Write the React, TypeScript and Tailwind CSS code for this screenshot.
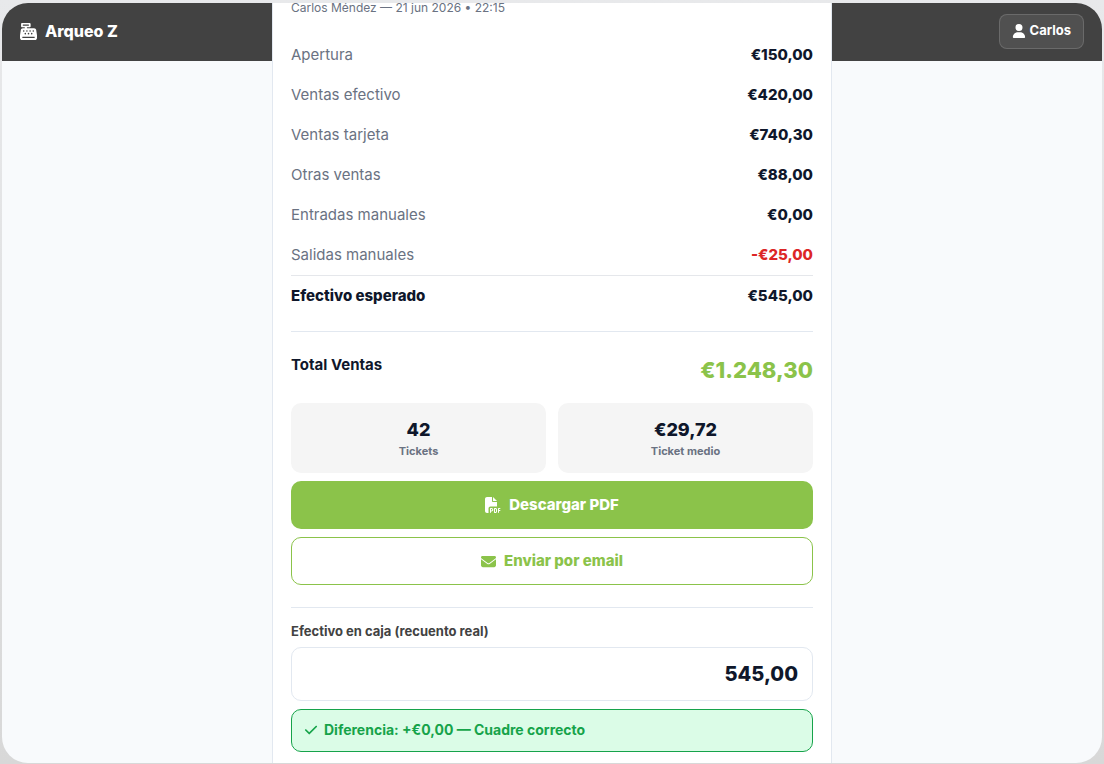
import { useState } from "react";
import { FaCashRegister, FaCheck, FaEnvelope, FaFilePdf, FaUser } from "react-icons/fa6";

const movements = [
  { label: "Apertura", amount: "€150,00" },
  { label: "Ventas efectivo", amount: "€420,00" },
  { label: "Ventas tarjeta", amount: "€740,30" },
  { label: "Otras ventas", amount: "€88,00" },
  { label: "Entradas manuales", amount: "€0,00" },
  { label: "Salidas manuales", amount: "-€25,00", negative: true },
];

const stats = [
  { value: "42", label: "Tickets" },
  { value: "€29,72", label: "Ticket medio" },
];

function Header() {
  return (
    <header className="flex h-[58px] items-center justify-between bg-[#424242] px-[18px] pb-0.5 text-white">
      <div className="flex items-center gap-2">
        <FaCashRegister className="size-[17px]" />
        <h1 className="text-base font-extrabold">Arqueo Z</h1>
      </div>
      <button
        type="button"
        className="flex h-[35px] items-center gap-1 rounded-lg border border-white/15 bg-white/8 px-3 text-[13px] font-bold"
      >
        <FaUser className="size-3.5" />
        Carlos
      </button>
    </header>
  );
}

function Report() {
  const [counted, setCounted] = useState("545,00");
  return (
    <main className="h-full w-full max-w-[560px] overflow-hidden border-x border-slate-200 bg-white px-[18px] text-[15px] text-slate-900">
      <p className="text-xs leading-[10px] text-gray-500">Carlos Méndez — 21 jun 2026 • 22:15</p>

      <dl className="mt-[22px]">
        {movements.map((row) => (
          <div key={row.label} className="flex h-10 items-center justify-between">
            <dt className="text-gray-500">{row.label}</dt>
            <dd className={row.negative ? "font-extrabold text-[#dc2626]" : "font-extrabold"}>{row.amount}</dd>
          </div>
        ))}
        <div className="flex h-[41px] items-center justify-between border-t border-gray-200 font-extrabold">
          <dt>Efectivo esperado</dt>
          <dd>€545,00</dd>
        </div>
      </dl>

      <section className="mt-[15px] border-t border-slate-200 pt-5">
        <div className="flex justify-between">
          <h2 className="leading-[26px] font-bold">Total Ventas</h2>
          <p className="text-[22px] leading-9 font-extrabold text-[#8bc34a]">€1.248,30</p>
        </div>
        <div className="mt-[15px] grid grid-cols-2 gap-3">
          {stats.map((stat) => (
            <div key={stat.label} className="rounded-[10px] bg-[#f5f5f5] py-3.5 text-center">
              <p className="text-lg leading-[26px] font-extrabold">{stat.value}</p>
              <p className="text-[11px] leading-4 font-bold text-gray-500">{stat.label}</p>
            </div>
          ))}
        </div>
        <div className="mt-2 grid gap-2 font-extrabold">
          <button
            type="button"
            className="flex h-12 items-center justify-center gap-2 rounded-[10px] bg-[#8bc34a] text-white"
          >
            <FaFilePdf className="size-4" />
            Descargar PDF
          </button>
          <button
            type="button"
            className="flex h-12 items-center justify-center gap-2 rounded-[10px] border border-[#8bc34a] text-[#8bc34a]"
          >
            <FaEnvelope className="size-[15px]" />
            Enviar por email
          </button>
        </div>
      </section>

      <section className="mt-[22px] border-t border-slate-200 pt-3.5">
        <label htmlFor="counted" className="block text-[13px] leading-[18px] font-bold text-[#424242]">
          Efectivo en caja (recuento real)
        </label>
        <input
          id="counted"
          type="text"
          inputMode="decimal"
          value={counted}
          onChange={(event) => setCounted(event.target.value)}
          className="mt-[7px] block h-[54px] w-full rounded-[10px] border border-slate-200 px-3.5 text-right text-xl font-extrabold"
        />
        <p
          role="status"
          className="mt-2 flex h-[43px] items-center gap-1.5 rounded-[10px] border border-[#16a34a] bg-green-100 px-3 pb-0.5 text-sm font-bold text-[#16a34a]"
        >
          <FaCheck className="size-3.5" />
          Diferencia: +€0,00 — Cuadre correcto
        </p>
      </section>
    </main>
  );
}

export default function App() {
  return (
    <div className="h-screen bg-linear-to-b from-[#e8e9eb] to-[#d8d8d8] px-0.5 pt-[3px] pb-px font-['Inter','Liberation_Sans',sans-serif]">
      <div className="relative h-full overflow-hidden rounded-[26px] bg-slate-50">
        <Header />
        <div className="pointer-events-none absolute inset-0 flex justify-center *:pointer-events-auto">
          <Report />
        </div>
      </div>
    </div>
  );
}
